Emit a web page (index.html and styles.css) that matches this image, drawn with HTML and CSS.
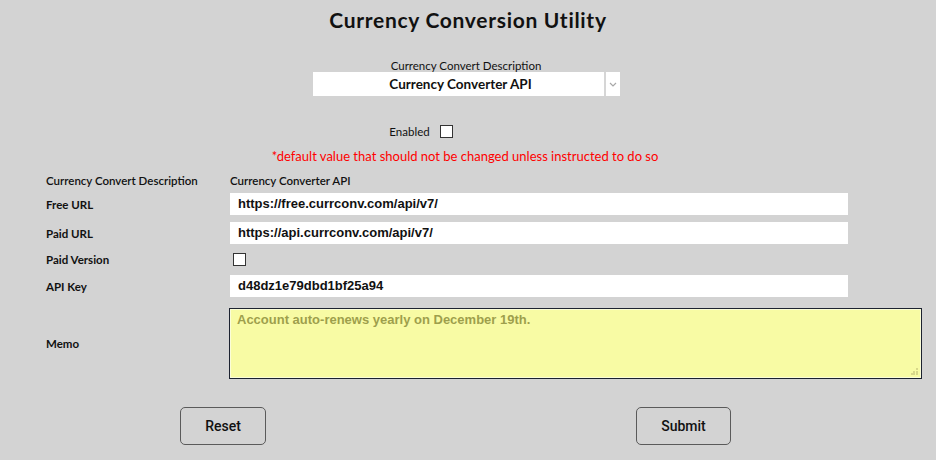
FILE: index.html
```html
<!DOCTYPE html>
<html>
<head>
<meta charset="utf-8">
<link rel="stylesheet" href="styles.css">
</head>
<body>
<div class="page">
  <h1 class="title">Currency Conversion Utility</h1>
  <div class="top-field">
    <div class="top-label">Currency Convert Description</div>
    <div class="select">
      <span class="select-text">Currency Converter API</span>
      <span class="select-arrow">
        <svg width="8" height="5" viewBox="0 0 8 5"><path d="M1 1 L4 4 L7 1" fill="none" stroke="#a8a8a8" stroke-width="1.2"/></svg>
      </span>
    </div>
  </div>
  <div class="enabled-row">
    <span class="enabled-label">Enabled</span>
    <span class="checkbox"></span>
  </div>
  <div class="warning">*default value that should not be changed unless instructed to do so</div>
  <div class="form">
    <div class="label light">Currency Convert Description</div>
    <div class="value-text">Currency Converter API</div>

    <div class="label">Free URL</div>
    <div class="input">https://free.currconv.com/api/v7/</div>

    <div class="label">Paid URL</div>
    <div class="input">https://api.currconv.com/api/v7/</div>

    <div class="label">Paid Version</div>
    <div class="check-cell"><span class="checkbox"></span></div>

    <div class="label">API Key</div>
    <div class="input">d48dz1e79dbd1bf25a94</div>

    <div class="label memo-label">Memo</div>
    <div class="memo">Account auto-renews yearly on December 19th.
      <svg class="grip" width="7" height="7" viewBox="0 0 7 7"><rect x="5" y="0" width="2" height="2" fill="#d8d88a"/><rect x="2" y="3" width="2" height="2" fill="#d8d88a"/><rect x="5" y="3" width="2" height="2" fill="#d8d88a"/><rect x="0" y="5" width="2" height="2" fill="#d8d88a"/><rect x="2" y="5" width="2" height="2" fill="#d8d88a"/><rect x="5" y="5" width="2" height="2" fill="#d8d88a"/></svg>
    </div>
  </div>
  <div class="buttons">
    <button class="btn btn-reset">Reset</button>
    <button class="btn btn-submit">Submit</button>
  </div>
</div>
</body>
</html>
```

FILE: styles.css
```css
html, body {
  margin: 0;
  padding: 0;
  background: #d3d3d3;
}
.page {
  width: 936px;
  height: 460px;
  font-family: Lato, "Liberation Sans", sans-serif;
  color: #111;
  overflow: hidden;
}
.title {
  margin: 0;
  padding-top: 7px;
  text-align: center;
  font-size: 21px;
  font-weight: 700;
  letter-spacing: 0.7px;
  line-height: 26px;
  height: 26px;
  color: #111;
}
.top-field {
  margin-top: 26px;
  display: flex;
  flex-direction: column;
  align-items: center;
  padding-right: 4px;
}
.top-label {
  font-size: 11.5px;
  line-height: 14px;
  margin-bottom: -1px;
}
.select {
  width: 307px;
  height: 24px;
  background: #fff;
  display: flex;
  align-items: center;
}
.select-text {
  flex: 1;
  text-align: center;
  font-weight: 700;
  font-size: 13.5px;
  padding-left: 5px;
}
.select-arrow {
  width: 14px;
  height: 24px;
  border-left: 2px solid #d6d6d6;
  display: flex;
  align-items: center;
  justify-content: center;
}
.enabled-row {
  margin-top: 28px;
  display: flex;
  justify-content: center;
  align-items: center;
  padding-right: 94px;
  gap: 10px;
  height: 14px;
}
.enabled-label {
  font-size: 11.5px;
}
.checkbox {
  display: inline-block;
  width: 11px;
  height: 11px;
  border: 1px solid #333;
  background: #fff;
}
.warning {
  margin-top: 11px;
  text-align: center;
  color: #ff0000;
  font-size: 13px;
  line-height: 14px;
  padding-right: 6px;
}
.form {
  margin-top: 11px;
  padding-left: 46px;
  display: grid;
  grid-template-columns: 184px 618px;
  grid-template-rows: 12px 22px 22px 17px 22px 75px;
  row-gap: 7px;
  align-items: center;
}
.label {
  font-size: 11.5px;
  font-weight: 700;
}
.label.light {
  font-weight: 600;
}
.memo-label {
  align-self: center;
  padding-top: 4px;
}
.value-text {
  font-size: 11.5px;
  font-weight: 600;
}
.input {
  height: 22px;
  background: #fff;
  font-family: "Liberation Sans", Arial, sans-serif;
  font-weight: 700;
  font-size: 13px;
  line-height: 22px;
  padding-left: 8px;
  box-sizing: border-box;
}
.check-cell {
  display: flex;
  align-items: center;
  padding-left: 3px;
}
.memo {
  margin-left: -1px;
  width: 693px;
  height: 71px;
  box-sizing: border-box;
  border: 1px solid #1c2230;
  box-shadow: inset 0 0 0 1px #fbfdd8;
  background: #f8fba4;
  color: #9e9f4c;
  font-family: "Liberation Sans", Arial, sans-serif;
  font-weight: 700;
  font-size: 13px;
  line-height: 18px;
  padding: 2px 7px;
  position: relative;
  align-self: start;
  margin-top: 4px;
}
.grip {
  position: absolute;
  right: 3px;
  bottom: 3px;
}
.buttons {
  margin-top: 28px;
  display: flex;
  padding-left: 180px;
}
.btn {
  height: 38px;
  background: #d3d3d3;
  border: 1px solid #5a5a5a;
  border-radius: 5px;
  font-family: Roboto, "Liberation Sans", sans-serif;
  font-weight: 500;
  font-size: 14px;
  color: #111;
  padding: 0;
}
.btn-reset {
  width: 86px;
}
.btn-submit {
  width: 95px;
  margin-left: 370px;
}
```
